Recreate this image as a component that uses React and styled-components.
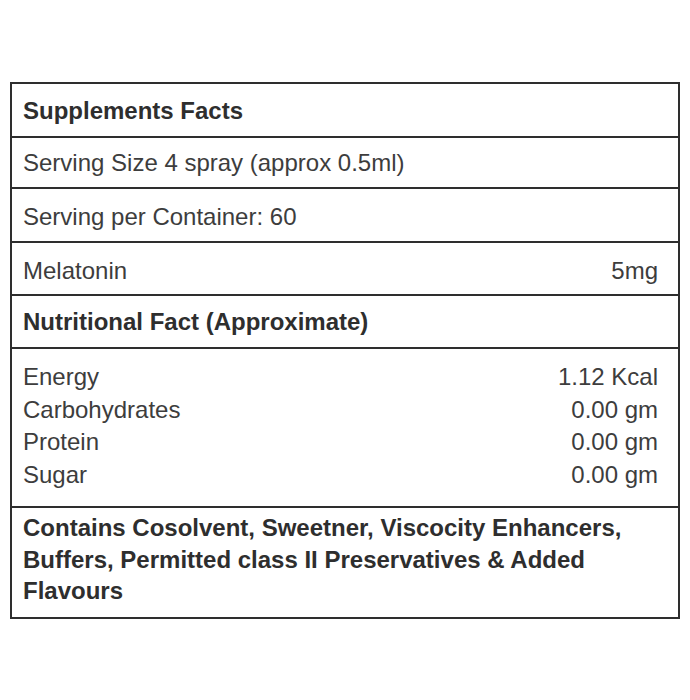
import React from "react";
import styled, { createGlobalStyle } from "styled-components";

const Global = createGlobalStyle`
  html, body { margin: 0; padding: 0; background: #fff; }
  body { font-family: "Liberation Sans", Arial, sans-serif; }
`;

const Page = styled.div`
  width: 690px;
  height: 700px;
  box-sizing: border-box;
  padding: 82px 10px 0 10px;
  background: #fff;
`;

const Table = styled.div`
  display: flex;
  flex-direction: column;
  border: 2px solid #2e2e2e;
  color: #3a3a3a;
  font-size: 24px;
`;

const Row = styled.div`
  display: flex;
  flex-direction: column;
  padding: ${(p) => p.$pad || "10px 20px 9px 11px"};
  line-height: ${(p) => p.$lh || "32px"};
  font-weight: ${(p) => (p.$bold ? 700 : 400)};
  color: ${(p) => (p.$bold ? "#2e2e2e" : "#3d3d3d")};
  & + & {
    border-top: 2px solid #2e2e2e;
  }
`;

const Line = styled.div`
  display: flex;
  justify-content: space-between;
  white-space: nowrap;
`;

const rows = [
  ["Energy", "1.12 Kcal"],
  ["Carbohydrates", "0.00 gm"],
  ["Protein", "0.00 gm"],
  ["Sugar", "0.00 gm"],
];

export default function App() {
  return (
    <Page>
      <Global />
      <Table>
        <Row $bold $pad="11px 20px 9px 11px">
          <Line>Supplements Facts</Line>
        </Row>
        <Row $pad="9px 20px 8px 11px">
          <Line>Serving Size 4 spray (approx 0.5ml)</Line>
        </Row>
        <Row $pad="12px 20px 8px 11px">
          <Line>Serving per Container: 60</Line>
        </Row>
        <Row $pad="12px 20px 7px 11px">
          <Line>
            <span>Melatonin</span>
            <span>5mg</span>
          </Line>
        </Row>
        <Row $bold $pad="10px 20px 9px 11px">
          <Line>Nutritional Fact (Approximate)</Line>
        </Row>
        <Row $pad="12px 20px 15px 11px" $lh="32.5px">
          {rows.map(([k, v]) => (
            <Line key={k}>
              <span>{k}</span>
              <span>{v}</span>
            </Line>
          ))}
        </Row>
        <Row $bold $pad="4px 20px 10px 11px" $lh="31.5px">
          <div>
            Contains Cosolvent, Sweetner, Viscocity Enhancers, Buffers, Permitted
            class II Preservatives &amp; Added Flavours
          </div>
        </Row>
      </Table>
    </Page>
  );
}
